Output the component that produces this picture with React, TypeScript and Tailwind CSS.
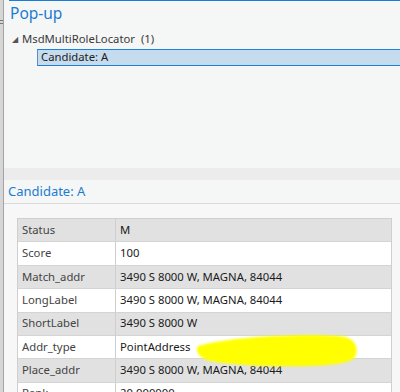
import React from "react";

const rows: { label: string; value: string }[] = [
  { label: "Status", value: "M" },
  { label: "Score", value: "100" },
  { label: "Match_addr", value: "3490 S 8000 W, MAGNA, 84044" },
  { label: "LongLabel", value: "3490 S 8000 W, MAGNA, 84044" },
  { label: "ShortLabel", value: "3490 S 8000 W" },
  { label: "Addr_type", value: "PointAddress" },
  { label: "Place_addr", value: "3490 S 8000 W, MAGNA, 84044" },
  { label: "Rank", value: "20.000000" },
];

function App() {
  return (
    <div
      className="relative w-[400px] h-[392px] overflow-hidden flex bg-[#f5f6f6] text-[11.3px]"
      style={{ fontFamily: '"Noto Sans", "Segoe UI", sans-serif' }}
    >
      {/* splitter on the left */}
      <div className="w-[4px] h-full shrink-0 bg-[#d6d6d6] border-r border-[#a3a3a3] flex flex-col pt-[20px]">
        <div className="h-[1px] w-[3px] bg-[#777]" />
        <div className="h-[1px] w-[3px] bg-[#777] mt-[2px]" />
      </div>

      <div className="flex-1 flex flex-col min-h-0">
        {/* top pane */}
        <div className="h-[168px] shrink-0 flex flex-col">
          <div className="ml-[5px] border-t border-[#1a7dd6] h-[27px] pl-[1px] flex items-center">
            <span className="text-[15.5px] text-[#1b7cd3] leading-none">Pop-up</span>
          </div>
          <div className="flex items-center h-[20px] mt-[2px] pl-[8px] text-[#3a3a3a]">
            <span className="text-[8px] text-[#555] mr-[4px] leading-none">◢</span>
            <span>MsdMultiRoleLocator</span>
            <span className="ml-[6px]">(1)</span>
          </div>
          <div className="ml-[33px] h-[17px] bg-[#c5dcef] border-y border-[#1f80d6] border-l border-l-[#5a8fbf] flex items-center pl-[3px] text-[#222]">
            Candidate: A
          </div>
        </div>

        <div className="h-[12px] shrink-0 bg-[#ececec]" />

        {/* lower pane */}
        <div className="flex-1 flex flex-col min-h-0">
          <div className="h-[24px] shrink-0 pl-[4px] flex items-center border-b border-[#dadada]">
            <span className="text-[13px] text-[#1b7cd3] leading-none">Candidate: A</span>
          </div>
          <div className="flex-1 bg-[#f7f7f7] pt-[14px] pl-[13px] pr-[8px]">
            <div className="w-[375px] border-l border-t border-r border-[#cfcfcf]">
              {rows.map((r, i) => (
                <div
                  key={r.label}
                  className={
                    "flex h-[23.4px] border-b border-[#d4d4d4] " +
                    (i % 2 === 0 ? "bg-[#e1e1e1]" : "bg-white")
                  }
                >
                  <div className="w-[98px] border-r border-[#cfcfcf] pl-[4px] flex items-center text-[#444]">
                    {r.label}
                  </div>
                  <div className="flex-1 pl-[4px] flex items-center text-[#1a1a1a]">
                    {r.value}
                  </div>
                </div>
              ))}
            </div>
          </div>
        </div>
      </div>

      {/* yellow marker stroke */}
      <svg
        className="absolute left-[190px] top-[328px] pointer-events-none"
        width="180"
        height="46"
        viewBox="0 0 180 46"
      >
        <defs>
          <filter id="soft" x="-10%" y="-30%" width="120%" height="160%">
            <feGaussianBlur stdDeviation="1" />
          </filter>
        </defs>
        <path
          d="M8 18 C40 8 120 5 150 8 C165 10 168 18 166 27 C164 34 150 37 120 38 C80 39 40 37 20 33 C8 30 5 22 8 18 Z"
          fill="#ffff00"
          filter="url(#soft)"
        />
      </svg>
    </div>
  );
}

export default App;
